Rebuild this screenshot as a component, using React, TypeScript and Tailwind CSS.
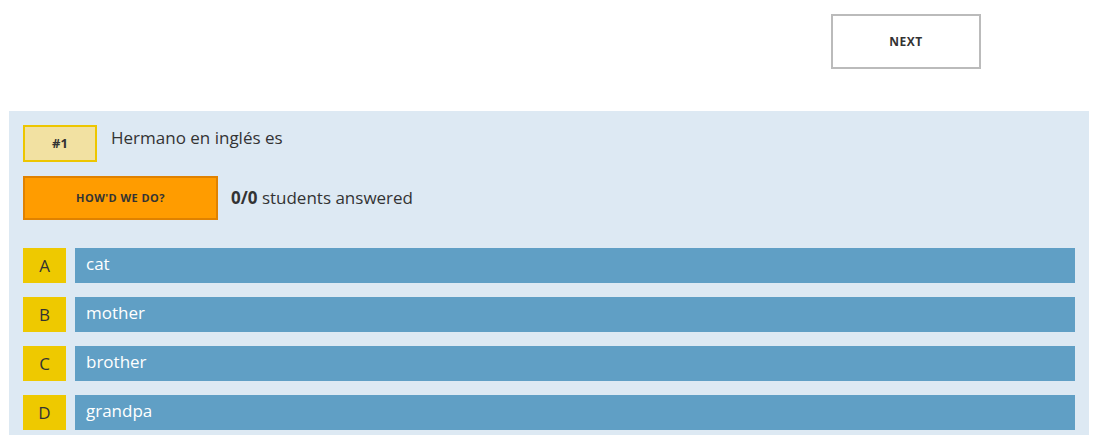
import React from "react";

const answers = [
  { letter: "A", text: "cat" },
  { letter: "B", text: "mother" },
  { letter: "C", text: "brother" },
  { letter: "D", text: "grandpa" },
];

export default function App() {
  return (
    <div className="min-h-screen bg-white text-[#333] font-['Open_Sans',sans-serif]">
      <div className="flex justify-end pt-[14px] pr-[130px]">
        <button className="h-[55px] w-[150px] border-2 border-[#bbbbbb] bg-white text-[12px] font-bold tracking-[0.04em] text-[#333]">
          NEXT
        </button>
      </div>

      <div className="mx-[9px] mt-[42px] mr-[22px] bg-[#dde9f3] px-[14px] pt-[14px] pb-[14px]">
        {/* question */}
        <div className="flex items-start gap-[14px]">
          <div className="flex h-[37px] w-[74px] items-center justify-center border-2 border-[#edc600] bg-[#f2e1a2] text-[13px] font-bold">
            #1
          </div>
          <p className="text-[17px] leading-[26px]">Hermano en inglés es</p>
        </div>

        {/* results */}
        <div className="mt-[14px] flex items-center gap-[13px]">
          <button className="h-[44px] w-[195px] border-2 border-[#e08200] bg-[#ff9c00] text-[11px] font-bold tracking-[0.04em] text-[#333]">
            HOW'D WE DO?
          </button>
          <p className="text-[17px]">
            <span className="font-bold">0/0</span> students answered
          </p>
        </div>

        {/* answers */}
        <div className="mt-[28px] flex flex-col gap-[14px]">
          {answers.map((a) => (
            <div key={a.letter} className="flex gap-[9px]">
              <div className="flex h-[35px] w-[43px] items-center justify-center bg-[#eec900] text-[17px]">
                {a.letter}
              </div>
              <div className="flex h-[35px] flex-1 items-center bg-[#609fc5] px-[11px] text-[17px] text-white">
                <span className="-mt-[4px]">{a.text}</span>
              </div>
            </div>
          ))}
        </div>
      </div>
    </div>
  );
}
